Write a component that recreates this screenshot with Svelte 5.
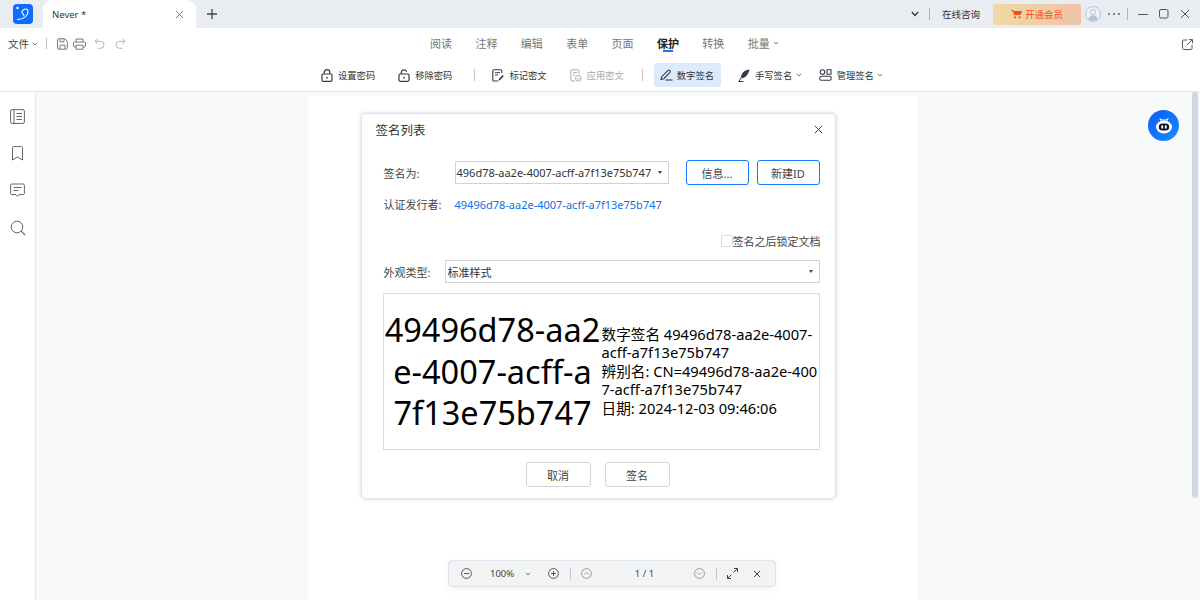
<script>
  const tabs = [
    { label: '阅读' },
    { label: '注释' },
    { label: '编辑' },
    { label: '表单' },
    { label: '页面' },
    { label: '保护', active: true },
    { label: '转换' },
    { label: '批量', caret: true }
  ];
</script>

{#snippet caret(cls = '')}
  <svg class="caret {cls}" width="6" height="4" viewBox="0 0 6 4"><path d="M.8.8 3 3l2.2-2.2" fill="none" stroke="currentColor" stroke-width="1"/></svg>
{/snippet}

<div class="app">
  <header class="titlebar">
    <div class="logo">
      <svg width="20" height="20" viewBox="0 0 20 20">
        <rect width="20" height="20" rx="4" fill="#0d6efd"/>
        <path d="M4 15.500c4.500 0 10-2 11-7.500.4-2.400-1.500-3.500-3.500-2.800C9.500 6 8 8 9.500 9.500c1 1 2.200 1.200 1.200 2.700" fill="none" stroke="#fff" stroke-width="1.100"/>
        <circle cx="4.500" cy="4" r="1.200" fill="#fff"/>
      </svg>
    </div>
    <div class="doc-tab">
      <span class="doc-name">Never *</span>
      <svg width="9" height="9" viewBox="0 0 9 9"><path d="M1 1l7 7M8 1 1 8" stroke="#777" stroke-width="1"/></svg>
    </div>
    <svg class="plus" width="10" height="10" viewBox="0 0 10 10"><path d="M5 0v10M0 5h10" stroke="#444" stroke-width="1.300"/></svg>
    <div class="spacer"></div>
    <svg width="8" height="6" viewBox="0 0 8 6"><path d="M.8 1 4 4.500 7.200 1" fill="none" stroke="#333" stroke-width="1.200"/></svg>
    <i class="tb-sep first"></i>
    <span class="consult">在线咨询</span>
    <div class="vip">
      <svg width="11" height="10" viewBox="0 0 11 10"><path d="M0 .7h2l.6 1.300H11L9.600 6H3.200L1.500 1.700H0z" fill="#f0501e"/><circle cx="4" cy="8.300" r="1.100" fill="#f0501e"/><circle cx="8.600" cy="8.300" r="1.100" fill="#f0501e"/></svg>
      <span>开通会员</span>
    </div>
    <svg class="avatar" width="16" height="16" viewBox="0 0 16 16">
      <circle cx="8" cy="8" r="7.500" fill="#eef1f7" stroke="#b8c2d6"/>
      <circle cx="8" cy="6.200" r="2.700" fill="none" stroke="#b8c2d6"/>
      <path d="M3.200 13c1-2.600 2.800-3.500 4.800-3.500s3.800.9 4.800 3.500c-2.800 2.200-6.800 2.200-9.600 0z" fill="#b8c2d6"/>
    </svg>
    <span class="dots"><b></b><b></b><b></b></span>
    <i class="tb-sep second"></i>
    <div class="win">
      <svg width="10" height="10" viewBox="0 0 10 10"><path d="M0 5.500h10" stroke="#555" stroke-width="1"/></svg>
      <svg width="10" height="10" viewBox="0 0 10 10"><rect x=".5" y=".5" width="8.500" height="8.500" rx="1.500" fill="none" stroke="#555"/></svg>
      <svg width="10" height="10" viewBox="0 0 10 10"><path d="M1 1l8 8M9 1 1 9" stroke="#555" stroke-width="1"/></svg>
    </div>
  </header>

  <section class="ribbon">
    <div class="ribbon-top">
      <div class="file-tools">
        <span class="file-label">文件</span>
        {@render caret()}
        <i class="file-sep"></i>
        <svg width="11" height="12" viewBox="0 0 11 12"><path d="M1.500.7h6.300l2.500 2.500v6.600c0 .8-.6 1.400-1.400 1.400H1.500C.9 11.200.5 10.800.5 10V1.700C.5 1.100.9.700 1.500.7z" fill="none" stroke="#777"/><path d="M3 1v2.800h4V1M3 11V7.200h5V11" fill="none" stroke="#777"/></svg>
        <svg width="13" height="12" viewBox="0 0 13 12"><path d="M3 4V1h7v3M3 9H1.500C1 9 .5 8.500.5 8V5c0-.6.500-1 1-1h10c.5 0 1 .4 1 1v3c0 .5-.5 1-1 1H10" fill="none" stroke="#777"/><path d="M3 7.200h7v4H3z" fill="none" stroke="#777"/></svg>
        <svg class="gap-undo" width="11" height="11" viewBox="0 0 11 11"><path d="M3.500.8 1 3.300l2.500 2.300M1 3.300h5.500a3.500 3.500 0 0 1 0 7H3.500" fill="none" stroke="#b5b5b5"/></svg>
        <svg class="gap-redo" width="11" height="11" viewBox="0 0 11 11"><path d="M7.500.8 10 3.300 7.500 5.600M10 3.300H4.500a3.500 3.500 0 0 0 0 7h3" fill="none" stroke="#b5b5b5"/></svg>
      </div>
      <nav class="tabs">
        {#each tabs as tab}
          <span class="tab" class:active={tab.active}>
            {tab.label}
            {#if tab.caret}{@render caret()}{/if}
          </span>
        {/each}
      </nav>
      <svg class="export" width="11" height="11" viewBox="0 0 11 11"><path d="M5 1H1.500C1 1 .5 1.400 .5 2v7.500c0 .6.500 1 1 1H9c.6 0 1-.4 1-1V6" fill="none" stroke="#555"/><path d="M5 6 10 1M6.800.6h3.700v3.700" fill="none" stroke="#555"/></svg>
    </div>
    <div class="ribbon-tools">
      <button class="tool">
        <svg width="12" height="13" viewBox="0 0 12 13"><rect x="1" y="5" width="10" height="7.300" rx="1.200" fill="none" stroke="#333b4a" stroke-width="1.200"/><path d="M3.200 5V3.500a2.800 2.800 0 0 1 5.600 0V5" fill="none" stroke="#333b4a" stroke-width="1.200"/><path d="M6 8v1.500" stroke="#333b4a" stroke-width="1.500"/></svg>
        设置密码
      </button>
      <button class="tool">
        <svg width="12" height="13" viewBox="0 0 12 13"><rect x="1" y="5" width="10" height="7.300" rx="1.200" fill="none" stroke="#333b4a" stroke-width="1.200"/><path d="M3.200 5V3.500A2.800 2.800 0 0 1 8.600 2.700" fill="none" stroke="#333b4a" stroke-width="1.200"/><path d="M6 8v1.500" stroke="#333b4a" stroke-width="1.500"/></svg>
        移除密码
      </button>
      <i class="tool-sep"></i>
      <button class="tool">
        <svg width="12" height="13" viewBox="0 0 12 13"><path d="M6 12H1.800C1.200 12 .8 11.600 .8 11V1.800C.8 1.200 1.200 .8 1.800 .8h7c.6 0 1 .4 1 1V4" fill="none" stroke="#333b4a" stroke-width="1.100"/><path d="M3 3.700h5M3 6h3" stroke="#333b4a"/><path d="M6.500 11.800 7 9.700l3.700-3.700 1.100 1.200-3.600 3.900z" fill="#333b4a"/></svg>
        标记密文
      </button>
      <button class="tool disabled">
        <svg width="12" height="13" viewBox="0 0 12 13"><path d="M5 12H1.800C1.200 12 .8 11.600 .8 11V1.800C.8 1.200 1.200 .8 1.800 .8h6c.6 0 1 .4 1 1V5" fill="none" stroke="#aaa"/><path d="M3 3.700h4M3 6h2" stroke="#aaa"/><circle cx="8.300" cy="9.300" r="2.800" fill="none" stroke="#aaa"/><path d="m7 9.300 1 1 1.600-1.700" fill="none" stroke="#aaa"/></svg>
        应用密文
      </button>
      <i class="tool-sep second"></i>
      <button class="tool selected">
        <svg width="13" height="12" viewBox="0 0 13 12"><path d="M1 10.500 1.800 7.700 8 1.300c.4-.4 1-.4 1.400 0l.6.6c.4.4.4 1 0 1.400L3.800 9.700z" fill="none" stroke="#333b4a" stroke-width="1.100"/><path d="M5.500 11h7" stroke="#333b4a" stroke-width="1.100"/></svg>
        数字签名
      </button>
      <button class="tool with-caret">
        <svg width="12" height="13" viewBox="0 0 12 13"><path d="M11.500.5C7 .8 4 3.500 3 7.500l1.500 1.700C8 8.500 10.500 5 11.500.5z" fill="#333b4a"/><path d="M3.500 8 1 12.500M.5 12.500h5" stroke="#333b4a"/></svg>
        手写签名
        {@render caret()}
      </button>
      <button class="tool with-caret">
        <svg width="13" height="12" viewBox="0 0 13 12"><circle cx="3.500" cy="3" r="2.300" fill="none" stroke="#333b4a" stroke-width="1.100"/><rect x=".8" y="7.300" width="11.400" height="4" rx="1.500" fill="none" stroke="#333b4a" stroke-width="1.100"/><path d="M8 .8h4v4.500H8z" fill="none" stroke="#333b4a" stroke-width="1.100"/></svg>
        管理签名
        {@render caret()}
      </button>
    </div>
  </section>

  <main class="workspace">
    <aside class="sidebar">
      <svg width="15" height="15" viewBox="0 0 15 15"><rect x=".6" y=".6" width="13.800" height="13.800" rx="1.500" fill="none" stroke="#666"/><path d="M4 .8v13.400M6.500 4.500h5.500M6.500 7.500h5.500M6.500 10.500h5.500" stroke="#666"/></svg>
      <svg width="15" height="15" viewBox="0 0 15 15"><path d="M2.500 14V1.500c0-.5.400-.9.900-.9h8.200c.5 0 .9.400.9.900V14L7.500 11z" fill="none" stroke="#666"/></svg>
      <svg width="15" height="15" viewBox="0 0 15 15"><path d="M1.800 1h11.400c.6 0 1.200.5 1.200 1.200v8.300c0 .6-.5 1.100-1.200 1.100H9L7.500 13.500 6 11.600H1.800c-.7 0-1.200-.5-1.200-1.100V2.200C.6 1.500 1.100 1 1.800 1z" fill="none" stroke="#666"/><path d="M3.500 4.500h8M3.500 7.500h5" stroke="#666"/></svg>
      <svg width="16" height="16" viewBox="0 0 16 16"><circle cx="7" cy="7" r="5.800" fill="none" stroke="#666"/><path d="m11.200 11.200 3.800 3.800" stroke="#666" stroke-width="1.200"/></svg>
    </aside>

    <div class="canvas">
      <div class="page">
        <div class="dialog">
          <div class="dialog-head">
            <span class="dialog-title">签名列表</span>
            <svg width="9" height="9" viewBox="0 0 9 9"><path d="M.8.8l7.400 7.400M8.200.8.8 8.200" stroke="#444" stroke-width="1"/></svg>
          </div>

          <div class="row sign-row">
            <span class="label">签名为:</span>
            <div class="select sign-select">
              <span class="sign-value">496d78-aa2e-4007-acff-a7f13e75b747</span>
              <span class="arrow"></span>
            </div>
            <button class="blue-btn first">信息...</button>
            <button class="blue-btn">新建ID</button>
          </div>

          <div class="row issuer-row">
            <span class="label">认证发行者:</span>
            <span class="issuer">49496d78-aa2e-4007-acff-a7f13e75b747</span>
          </div>

          <div class="lock-row">
            <span class="check"></span>
            <span>签名之后锁定文档</span>
          </div>

          <div class="row type-row">
            <span class="label">外观类型:</span>
            <div class="select type-select">
              <span>标准样式</span>
              <span class="arrow"></span>
            </div>
          </div>

          <div class="preview">
            <div class="preview-name">49496d78-aa2<br/>e-4007-acff-a<br/>7f13e75b747</div>
            <div class="preview-info">数字签名 49496d78-aa2e-4007-<br/>acff-a7f13e75b747<br/>辨别名: CN=49496d78-aa2e-400<br/>7-acff-a7f13e75b747<br/>日期: 2024-12-03 09:46:06</div>
          </div>

          <div class="dialog-actions">
            <button class="plain-btn">取消</button>
            <button class="plain-btn">签名</button>
          </div>
        </div>
      </div>

      <button class="assistant" aria-label="助手">
        <svg width="20" height="18" viewBox="0 0 20 18">
          <path d="M6 3.500 5.500 1 8 2.500h4L14.500 1 14 3.500z" fill="#fff"/>
          <ellipse cx="10" cy="10" rx="8" ry="6.500" fill="#fff"/>
          <rect x="4.800" y="6.500" width="10.400" height="7" rx="3.500" fill="#0d1533"/>
          <rect x="7.300" y="8.300" width="1.800" height="3.400" rx=".9" fill="#fff"/>
          <rect x="10.900" y="8.300" width="1.800" height="3.400" rx=".9" fill="#fff"/>
        </svg>
      </button>

      <div class="zoombar">
        <svg class="zb-minus" width="11" height="11" viewBox="0 0 11 11"><circle cx="5.500" cy="5.500" r="4.900" fill="none" stroke="#555"/><path d="M3 5.500h5" stroke="#555"/></svg>
        <span class="zb-pct">100%</span>
        <span class="zb-caret">{@render caret()}</span>
        <svg class="zb-plus" width="11" height="11" viewBox="0 0 11 11"><circle cx="5.500" cy="5.500" r="4.900" fill="none" stroke="#555"/><path d="M3 5.500h5M5.500 3v5" stroke="#555"/></svg>
        <i class="zb-sep"></i>
        <svg width="11" height="11" viewBox="0 0 11 11"><circle cx="5.500" cy="5.500" r="4.900" fill="none" stroke="#999"/><path d="m3.300 6.500 2.200-2.200 2.200 2.200" fill="none" stroke="#999"/></svg>
        <span class="zb-page">1 / 1</span>
        <svg width="11" height="11" viewBox="0 0 11 11"><circle cx="5.500" cy="5.500" r="4.900" fill="none" stroke="#999"/><path d="m3.300 4.500 2.200 2.200 2.200-2.200" fill="none" stroke="#999"/></svg>
        <i class="zb-sep right"></i>
        <svg class="zb-full" width="11" height="11" viewBox="0 0 11 11"><path d="M6.500 4.500 10.500.5M7 .5h3.500V4M4.500 6.500l-4 4M4 10.500H.5V7" fill="none" stroke="#444"/></svg>
        <svg class="zb-close" width="8" height="8" viewBox="0 0 8 8"><path d="M.8.8l6.400 6.400M7.200.8.8 7.200" stroke="#444" stroke-width="1"/></svg>
      </div>

      <div class="scrollbar"><div class="thumb"></div></div>
    </div>
  </main>
</div>

<style>
  :global(body) {
    margin: 0;
    background: #fff;
  }
  .app {
    width: 1200px;
    height: 600px;
    overflow: hidden;
    display: flex;
    flex-direction: column;
    font-family: "Noto Sans", "Noto Sans CJK SC", sans-serif;
    color: #333;
  }
  button {
    font-family: inherit;
    cursor: pointer;
  }

  /* title bar */
  .titlebar {
    height: 28px;
    flex: none;
    background: #e9ecf0;
    display: flex;
    align-items: center;
  }
  .logo {
    display: flex;
    margin-left: 13px;
  }
  .doc-tab {
    width: 153px;
    height: 28px;
    margin-left: 10px;
    padding: 0 12px 0 9px;
    box-sizing: border-box;
    background: #fff;
    border-radius: 9px 9px 0 0;
    display: flex;
    align-items: center;
    justify-content: space-between;
  }
  .doc-name {
    font-size: 9.500px;
    color: #333;
  }
  .plus {
    margin-left: 11px;
  }
  .spacer {
    flex: 1;
  }
  .tb-sep {
    width: 1px;
    height: 12px;
    background: #aeb3ba;
  }
  .tb-sep.first {
    margin-left: 10px;
  }
  .consult {
    font-size: 9.500px;
    margin-left: 12px;
    color: #333;
  }
  .vip {
    width: 88px;
    height: 21px;
    margin-left: 13px;
    border-radius: 3px;
    background: linear-gradient(90deg, #f2d9a4, #eec3a8);
    display: flex;
    align-items: center;
    justify-content: center;
    gap: 3px;
    font-size: 9.500px;
    color: #f0501e;
  }
  .avatar {
    margin-left: 4px;
  }
  .dots {
    display: flex;
    gap: 3px;
    margin-left: 7px;
  }
  .dots b {
    width: 2px;
    height: 2px;
    border-radius: 50%;
    background: #666;
  }
  .tb-sep.second {
    margin-left: 7px;
  }
  .win {
    display: flex;
    gap: 11px;
    margin-left: 10px;
    margin-right: 10px;
  }

  /* ribbon */
  .ribbon {
    height: 64px;
    flex: none;
    box-sizing: border-box;
    background: #fff;
    border-bottom: 1px solid #e8e8e8;
    display: flex;
    flex-direction: column;
  }
  .ribbon-top {
    height: 34px;
    position: relative;
    display: flex;
    align-items: center;
  }
  .file-tools {
    position: absolute;
    left: 8px;
    top: 8px;
    display: flex;
    align-items: center;
    color: #666;
  }
  .file-label {
    font-size: 10.500px;
    color: #444;
    margin-right: 3px;
  }
  .file-sep {
    width: 1px;
    height: 11px;
    background: #bbb;
    margin: 0 10px 0 8px;
  }
  .file-tools svg + svg {
    margin-left: 5px;
  }
  .file-tools .gap-undo {
    margin-left: 8px;
  }
  .file-tools .gap-redo {
    margin-left: 10px;
  }
  .export {
    position: absolute;
    right: 7px;
    top: 11px;
  }
  .tabs {
    display: flex;
    gap: 23.400px;
    font-size: 11px;
    color: #777;
    margin: 0 0 5px 430px;
  }
  .tab {
    position: relative;
    display: flex;
    align-items: center;
    gap: 3px;
    white-space: nowrap;
  }
  .tab.active {
    color: #222;
    font-weight: 700;
  }
  .tab.active::after {
    content: "";
    position: absolute;
    left: 6px;
    right: 6px;
    bottom: -1px;
    height: 1.500px;
    background: #1677ff;
  }
  .caret {
    color: #777;
    flex: none;
  }
  .ribbon-tools {
    display: flex;
    align-items: center;
    height: 26px;
    padding-left: 315px;
  }
  .tool {
    border: 0;
    background: none;
    height: 24px;
    padding: 0 6px;
    margin-right: 11px;
    border-radius: 3px;
    display: flex;
    align-items: center;
    gap: 5px;
    font-size: 9.300px;
    color: #333;
    white-space: nowrap;
  }
  .tool.disabled {
    color: #aaa;
  }
  .tool.selected {
    background: #dcebfb;
    gap: 4px;
    padding: 0 7px 0 6px;
    margin-right: 11px;
  }
  .tool.with-caret {
    margin-right: 5px;
  }
  .tool.with-caret .caret {
    margin-left: -1.500px;
  }
  .tool-sep {
    width: 1px;
    height: 12px;
    background: #c4c4c4;
    margin: 0 11px 0 5px;
  }
  .tool-sep.second {
    margin: 0 11px 0 1px;
  }

  /* workspace */
  .workspace {
    flex: 1;
    min-height: 0;
    display: flex;
  }
  .sidebar {
    width: 36px;
    flex: none;
    box-sizing: border-box;
    border-right: 1px solid #e8e8e8;
    padding: 17px 0 0 0;
    display: flex;
    flex-direction: column;
    align-items: center;
    gap: 22px;
    background: #fff;
  }
  .canvas {
    flex: 1;
    position: relative;
    background: #f8f9fb;
    overflow: hidden;
    padding: 4px 12px 0 0;
    box-sizing: border-box;
  }
  .page {
    width: 609px;
    height: 600px;
    margin: 0 auto;
    background: #fff;
    padding: 17px 0 0 53px;
    box-sizing: border-box;
  }
  .dialog {
    width: 475px;
    height: 386px;
    box-sizing: border-box;
    background: #fff;
    border: 1px solid #dfe3ea;
    border-radius: 5px;
    box-shadow: 0 0 4px rgba(120, 140, 180, 0.35);
    padding: 0 15px 0 21px;
    display: flex;
    flex-direction: column;
  }
  .dialog-head {
    display: flex;
    align-items: center;
    justify-content: space-between;
    height: 31px;
    margin-left: -7px;
    margin-right: -3px;
  }
  .dialog-title {
    font-size: 12.500px;
    color: #333;
  }
  .row {
    display: flex;
    align-items: center;
  }
  .label {
    font-size: 11px;
    color: #444;
    padding-left: 1px;
    box-sizing: border-box;
  }
  .sign-row {
    margin-top: 15px;
    height: 25px;
  }
  .sign-row .label {
    width: 72px;
    flex: none;
  }
  .select {
    box-sizing: border-box;
    height: 23px;
    border: 1px solid #d2d2d2;
    background: #fff;
    display: flex;
    align-items: center;
    justify-content: space-between;
    padding: 0 6px 0 1px;
    font-size: 11px;
    color: #333;
  }
  .sign-select {
    width: 214px;
    flex: none;
    overflow: hidden;
  }
  .sign-value {
    white-space: nowrap;
  }
  .arrow {
    width: 0;
    height: 0;
    flex: none;
    border-left: 2.500px solid transparent;
    border-right: 2.500px solid transparent;
    border-top: 3.500px solid #444;
  }
  .blue-btn {
    width: 64px;
    height: 25px;
    padding: 0;
    background: #fff;
    border: 1px solid #1677ff;
    border-radius: 3px;
    font-size: 11px;
    color: #444;
    margin-left: 8px;
  }
  .blue-btn.first {
    margin-left: 17px;
  }
  .issuer-row {
    margin-top: 11px;
    height: 16px;
  }
  .issuer-row .label {
    width: 72px;
    flex: none;
  }
  .issuer {
    font-size: 11px;
    color: #0f6fe8;
    white-space: nowrap;
  }
  .lock-row {
    display: flex;
    align-items: center;
    justify-content: flex-end;
    font-size: 11px;
    color: #444;
    margin: 21px -1px 0 0;
    height: 16px;
  }
  .check {
    width: 10px;
    height: 10px;
    border: 1px solid #dcdcdc;
    border-radius: 1px;
  }
  .type-row {
    margin-top: 11px;
  }
  .type-row .label {
    width: 62px;
    flex: none;
  }
  .type-select {
    width: 375px;
    padding: 0 6px 0 2px;
  }
  .preview {
    width: 437px;
    height: 157px;
    margin-top: 10px;
    box-sizing: border-box;
    border: 1px solid #dcdcdc;
    display: flex;
    align-items: center;
    color: #000;
  }
  .preview-name {
    width: 218px;
    flex: none;
    text-align: center;
    font-size: 32.500px;
    line-height: 41.500px;
    white-space: nowrap;
  }
  .preview-info {
    font-size: 14.650px;
    line-height: 18.500px;
    white-space: nowrap;
    margin-top: -1px;
  }
  .dialog-actions {
    display: flex;
    justify-content: center;
    gap: 14px;
    margin: 12px 0 0 -7px;
  }
  .plain-btn {
    width: 65px;
    height: 25px;
    padding: 0;
    background: #fff;
    border: 1px solid #d4d4d4;
    border-radius: 3px;
    font-size: 11px;
    color: #444;
  }

  /* floating */
  .assistant {
    position: absolute;
    right: 21px;
    top: 18px;
    width: 31px;
    height: 31px;
    padding: 0;
    border: 0;
    border-radius: 50%;
    background: linear-gradient(135deg, #0a5cf5, #1a8cff);
    display: flex;
    align-items: center;
    justify-content: center;
  }
  .zoombar {
    position: absolute;
    left: 412px;
    top: 468px;
    width: 328px;
    height: 27px;
    box-sizing: border-box;
    background: #f2f3f5;
    border: 1px solid #e1e3e8;
    border-radius: 4px;
    box-shadow: 0 2px 6px rgba(0, 0, 0, 0.06);
    display: flex;
    align-items: center;
    padding-left: 12px;
    font-size: 9.500px;
    color: #444;
  }
  .zb-pct {
    margin-left: 18px;
    width: 24px;
  }
  .zb-caret {
    margin-left: 11px;
    display: flex;
  }
  .zb-plus {
    margin-left: 17px;
  }
  .zb-sep {
    width: 1px;
    height: 12px;
    background: #c4c6ca;
    margin: 0 10px 0 11px;
  }
  .zb-page {
    width: 99px;
    text-align: center;
    margin: 0 0 0 3px;
  }
  .zb-sep.right {
    margin: 0 10px 0 11px;
  }
  .zb-close {
    margin-left: 15px;
  }
  .scrollbar {
    position: absolute;
    right: 0;
    top: 0;
    bottom: 0;
    width: 10px;
    background: #f8f9fb;
    display: flex;
    justify-content: center;
  }
  .thumb {
    width: 6px;
    height: 406px;
    border-radius: 3px;
    background: #d0d7e5;
  }
</style>
